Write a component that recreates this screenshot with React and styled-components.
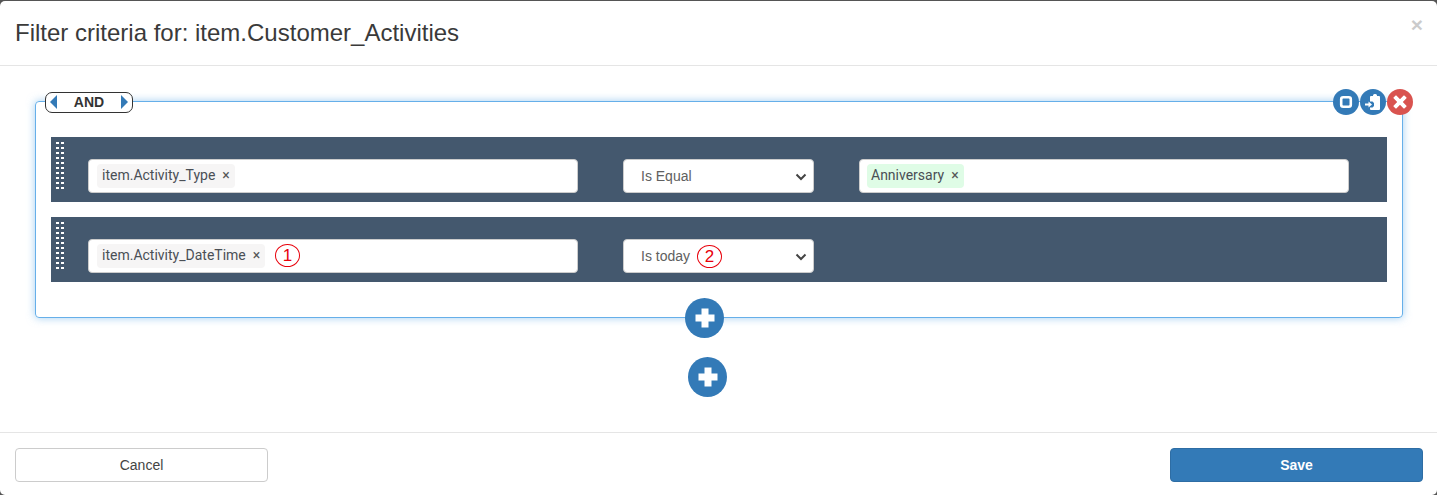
import React from 'react'
import styled, { createGlobalStyle } from 'styled-components'

const GlobalStyle = createGlobalStyle`
  html, body {
    margin: 0;
    height: 100%;
    background: #555;
    overflow: hidden;
  }
  body {
    font-family: "Liberation Sans", Arial, sans-serif;
    color: #333;
  }
`

const Dialog = styled.div`
  margin-top: 1px;
  height: 494px;
  background: #fff;
  border-radius: 5px;
  overflow: hidden;
`

const Header = styled.div`
  height: 64px;
  border-bottom: 1px solid #e5e5e5;
  display: flex;
  align-items: center;
  justify-content: space-between;
  padding: 0 14px 0 15px;
`

const Title = styled.h4`
  margin: 0 0 1px;
  font-size: 24px;
  font-weight: 400;
  color: #3a3a3a;
`

const Close = styled.span`
  font-size: 21px;
  font-weight: 700;
  line-height: 1;
  color: #000;
  opacity: 0.2;
  margin-bottom: 17px;
`

const Body = styled.div`
  padding: 35px 34px 35px 35px;
`

const Group = styled.div`
  position: relative;
  border: 1px solid #66afe9;
  border-radius: 4px;
  box-shadow: 0 0 8px rgba(102, 175, 233, 0.6);
  padding: 35px 15px;
  display: flex;
  flex-direction: column;
  gap: 15px;
`

const Operator = styled.div`
  position: absolute;
  left: 9px;
  top: -10px;
  width: 78px;
  height: 19px;
  background: #fff;
  border: 1px solid #333;
  border-radius: 7px;
  display: flex;
  align-items: center;
  justify-content: space-between;
  padding: 0 4px;
  box-sizing: content-box;
  font-size: 14px;
  font-weight: 700;
  color: #333;
`

const OperatorLabel = styled.span`
  margin-top: -2px;
`

const Arrow = styled.span`
  width: 0;
  height: 0;
  margin-top: -1px;
  border-top: 7px solid transparent;
  border-bottom: 7px solid transparent;
  ${(p) => (p.$left ? 'border-right: 7px solid #337ab7;' : 'border-left: 7px solid #337ab7;')}
`

const Actions = styled.div`
  position: absolute;
  right: -11px;
  top: -13px;
  display: flex;
  gap: 1px;
`

const RoundButton = styled.span`
  width: ${(p) => p.$width || 26}px;
  height: ${(p) => p.$height || 26}px;
  border-radius: 50%;
  background: ${(p) => p.$bg || '#337ab7'};
  display: flex;
  align-items: center;
  justify-content: center;
`

const GroupAdd = styled(RoundButton)`
  position: absolute;
  left: 649px;
  bottom: -21px;
`

const RootAdd = styled(RoundButton)`
  margin: 39px 0 0 653px;
`

const Row = styled.div`
  position: relative;
  height: 65px;
  box-sizing: border-box;
  background: #44586e;
  padding: 22px 38px 9px 37px;
  display: grid;
  grid-template-columns: 490px 191px 490px;
  column-gap: 45px;
`

const GripWrap = styled.span`
  position: absolute;
  left: 5px;
  top: 5px;
  line-height: 0;
`

const TagInput = styled.div`
  position: relative;
  height: 34px;
  box-sizing: border-box;
  background: #fff;
  border: 1px solid #ccc;
  border-radius: 4px;
  padding: 4px 8px;
  display: flex;
  align-items: center;
`

const Chip = styled.span`
  height: 24px;
  background: ${(p) => (p.$green ? '#dffce6' : '#f6f5f5')};
  border-radius: 4px;
  padding: 0 5px 2px ${(p) => (p.$green ? 4 : 5)}px;
  margin-left: ${(p) => (p.$green ? -1 : 0)}px;
  box-sizing: border-box;
  display: inline-flex;
  align-items: center;
  gap: 7px;
  font-family: Roboto, sans-serif;
  font-size: 14px;
  color: #4a4f55;
`

const ChipX = styled.span`
  font-size: 14px;
  color: #555;
`

const SelectWrap = styled.div`
  position: relative;
  height: 34px;
`

const Select = styled.select`
  appearance: none;
  width: 100%;
  height: 34px;
  background: #fff;
  border: 1px solid #ccc;
  border-radius: 4px;
  padding: 0 12px 0 17px;
  font-family: "Liberation Sans", Arial, sans-serif;
  font-size: 14px;
  color: #606060;
`

const Chevron = styled.svg`
  position: absolute;
  right: 7px;
  top: 14px;
  pointer-events: none;
`

const Callout = styled.span`
  position: absolute;
  left: ${(p) => p.$left}px;
  top: ${(p) => p.$top}px;
  width: 25px;
  height: 23px;
  box-sizing: border-box;
  border: 1.5px solid #e8000b;
  border-radius: 50%;
  display: flex;
  align-items: center;
  justify-content: center;
  color: #e8000b;
  font-size: 17px;
`

const Footer = styled.div`
  border-top: 1px solid #e5e5e5;
  padding: 15px 14px 12px 15px;
  display: flex;
  justify-content: space-between;
`

const Button = styled.button`
  width: 253px;
  height: 34px;
  border-radius: 4px;
  border: 1px solid ${(p) => (p.$primary ? '#2e6da4' : '#ccc')};
  background: ${(p) => (p.$primary ? '#337ab7' : '#fff')};
  color: ${(p) => (p.$primary ? '#fff' : '#444')};
  font-family: "Liberation Sans", Arial, sans-serif;
  font-size: 14px;
  font-weight: ${(p) => (p.$primary ? 700 : 400)};
`

const Grip = () => {
  const dots = []
  for (let i = 0; i < 10; i++) {
    dots.push(<rect key={`a${i}`} x="0" y={i * 5} width="3" height="2" />)
    dots.push(<rect key={`b${i}`} x="5" y={i * 5} width="3" height="2" />)
  }
  return (
    <svg width="8" height="48" fill="#fff">
      {dots}
    </svg>
  )
}

const PlusIcon = () => (
  <svg width="20" height="20" viewBox="0 0 20 20" fill="#fff">
    <path d="M6.500 0.500h7v6h6v7h-6v6h-7v-6h-6v-7h6z" />
  </svg>
)

const StopIcon = () => (
  <svg width="14" height="14" viewBox="0 0 14 14">
    <rect x="2.200" y="2.200" width="9.600" height="9.600" rx="2" fill="none" stroke="#fff" strokeWidth="2.600" />
  </svg>
)

const PasteIcon = () => (
  <svg width="18" height="16" viewBox="0 0 18 16" fill="#fff">
    <path d="M7 2h2V1.500A1.500 1.500 0 0 1 10.500 0h1A1.500 1.500 0 0 1 13 1.500V2h2a1 1 0 0 1 1 1v12a1 1 0 0 1-1 1H7a1 1 0 0 1-1-1v-1.500h2.500l1.500-1.500v-3L8.500 7.500H6V3a1 1 0 0 1 1-1z" />
    <path d="M1 9.500h3.500V7.500l3.500 3-3.500 3v-2H1z" />
  </svg>
)

const RemoveIcon = () => (
  <svg width="14" height="14" viewBox="0 0 15 15" fill="#fff">
    <path d="M3.600.600 7.500 4.500 11.400.600a.6.6 0 0 1 .8 0l2.200 2.200a.6.6 0 0 1 0 .8L10.500 7.500l3.900 3.900a.6.6 0 0 1 0 .8l-2.200 2.200a.6.6 0 0 1-.8 0L7.500 10.500l-3.900 3.900a.6.6 0 0 1-.8 0L.6 12.200a.6.6 0 0 1 0-.8L4.500 7.500.6 3.600a.6.6 0 0 1 0-.8L2.800.600a.6.6 0 0 1 .8 0z" />
  </svg>
)

const SelectArrow = () => (
  <Chevron width="12" height="8" viewBox="0 0 12 8">
    <path d="M1.500 1.500 6 6l4.500-4.500" fill="none" stroke="#444" strokeWidth="2" />
  </Chevron>
)

const App = () => {
  return (
    <>
      <GlobalStyle />
      <Dialog>
        <Header>
          <Title>Filter criteria for: item.Customer_Activities</Title>
          <Close>×</Close>
        </Header>
        <Body>
          <Group>
            <Operator>
              <Arrow $left />
              <OperatorLabel>AND</OperatorLabel>
              <Arrow />
            </Operator>
            <Actions>
              <RoundButton><StopIcon /></RoundButton>
              <RoundButton><PasteIcon /></RoundButton>
              <RoundButton $bg="#d9534f"><RemoveIcon /></RoundButton>
            </Actions>
            <Row>
              <GripWrap><Grip /></GripWrap>
              <TagInput>
                <Chip>item.Activity_Type <ChipX>×</ChipX></Chip>
              </TagInput>
              <SelectWrap>
                <Select defaultValue="Is Equal">
                  <option>Is Equal</option>
                  <option>Is today</option>
                </Select>
                <SelectArrow />
              </SelectWrap>
              <TagInput>
                <Chip $green>Anniversary <ChipX>×</ChipX></Chip>
              </TagInput>
            </Row>
            <Row>
              <GripWrap><Grip /></GripWrap>
              <TagInput>
                <Chip>item.Activity_DateTime <ChipX>×</ChipX></Chip>
                <Callout $left={186} $top={4}>1</Callout>
              </TagInput>
              <SelectWrap>
                <Select defaultValue="Is today">
                  <option>Is Equal</option>
                  <option>Is today</option>
                </Select>
                <SelectArrow />
                <Callout $left={74} $top={6}>2</Callout>
              </SelectWrap>
            </Row>
            <GroupAdd $width={39} $height={40}><PlusIcon /></GroupAdd>
          </Group>
          <RootAdd $width={39} $height={40}><PlusIcon /></RootAdd>
        </Body>
        <Footer>
          <Button>Cancel</Button>
          <Button $primary>Save</Button>
        </Footer>
      </Dialog>
    </>
  )
}

export default App
